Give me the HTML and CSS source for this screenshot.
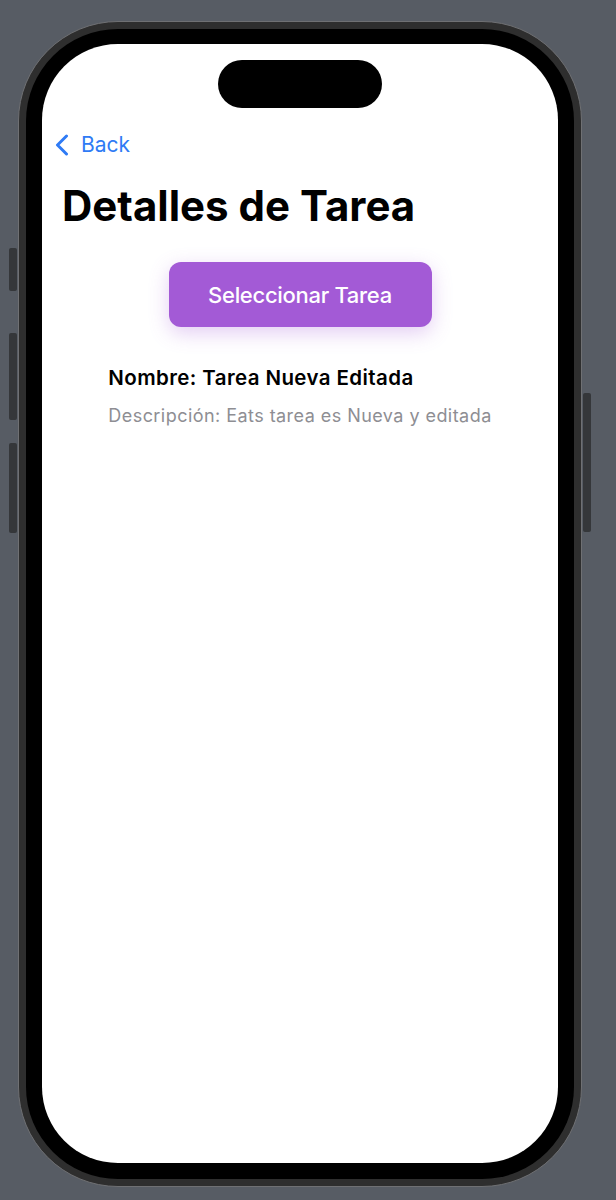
FILE: index.html
```html
<!DOCTYPE html>
<html lang="es">
<head>
<meta charset="utf-8">
<title>Detalles de Tarea</title>
<link rel="stylesheet" href="styles.css">
</head>
<body>
<div class="device">
  <span class="side-btn btn-action"></span>
  <span class="side-btn btn-vol-up"></span>
  <span class="side-btn btn-vol-down"></span>
  <span class="side-btn btn-power"></span>
  <div class="bezel">
    <div class="screen">
      <div class="island"></div>
      <nav class="nav-bar">
        <a class="back" href="#">
          <svg class="chevron" width="16" height="22" viewBox="0 0 16 22" aria-hidden="true">
            <path d="M12.5 2 L3.5 11 L12.5 20" fill="none" stroke="currentColor" stroke-width="3" stroke-linecap="round" stroke-linejoin="round"/>
          </svg>
          <span class="back-label">Back</span>
        </a>
      </nav>
      <h1 class="title">Detalles de Tarea</h1>
      <div class="content">
        <button class="select-btn" type="button">Seleccionar Tarea</button>
        <div class="task">
          <p class="task-name">Nombre: Tarea Nueva Editada</p>
          <p class="task-desc">Descripción: Eats tarea es Nueva y editada</p>
        </div>
      </div>
    </div>
  </div>
</div>
</body>
</html>
```

FILE: styles.css
```css
* {
  box-sizing: border-box;
}

html, body {
  margin: 0;
  padding: 0;
}

body {
  width: 616px;
  height: 1200px;
  background: #575c64;
  font-family: Inter, "Noto Sans", "Liberation Sans", sans-serif;
  padding: 21px 0 0 18px;
  overflow: hidden;
}

.device {
  position: relative;
  width: 564px;
  height: 1166px;
  border-radius: 100px;
  background: #2e2e2e;
  border: 1px solid #6f7073;
  padding: 7px;
}

.side-btn {
  position: absolute;
  width: 8px;
  background: #35373a;
  border-radius: 2px;
}

.btn-action {
  left: -10px;
  top: 226px;
  height: 43px;
}

.btn-vol-up {
  left: -10px;
  top: 311px;
  height: 87px;
}

.btn-vol-down {
  left: -10px;
  top: 421px;
  height: 90px;
}

.btn-power {
  right: -10px;
  top: 371px;
  height: 139px;
}

.bezel {
  width: 100%;
  height: 100%;
  background: #000;
  border-radius: 92px;
  padding: 15px 16px 16px 16px;
}

.screen {
  width: 516px;
  height: 1119px;
  background: #fff;
  border-radius: 76px;
  padding-top: 16px;
  display: flex;
  flex-direction: column;
}

.island {
  width: 164px;
  height: 48px;
  border-radius: 24px;
  background: #000;
  margin: 0 auto;
  flex: none;
}

.nav-bar {
  margin-top: 14px;
  height: 44px;
  display: flex;
  align-items: center;
  padding-left: 12px;
}

.back {
  display: flex;
  align-items: center;
  gap: 11px;
  color: #2f7bf5;
  text-decoration: none;
}

.chevron {
  display: block;
  flex: none;
  margin-top: 1px;
}

.back-label {
  font-size: 21px;
  line-height: 44px;
  font-weight: 400;
  padding-top: 1px;
}

.title {
  margin: 14px 0 0 0;
  padding-left: 20px;
  font-size: 42px;
  line-height: 52px;
  font-weight: 700;
  color: #000;
  letter-spacing: 0;
}

.content {
  display: flex;
  flex-direction: column;
  align-items: center;
  margin-top: 30px;
}

.select-btn {
  width: 263px;
  height: 65px;
  border: none;
  border-radius: 12px;
  background: #a35ad6;
  color: #fff;
  font-family: inherit;
  font-size: 22px;
  font-weight: 500;
  letter-spacing: -0.3px;
  padding-top: 1px;
  box-shadow: 0 6px 20px rgba(163, 90, 214, 0.3);
  cursor: pointer;
}

.task {
  margin-top: 38px;
  display: flex;
  flex-direction: column;
  align-items: flex-start;
}

.task-name {
  margin: 0;
  font-size: 20.5px;
  line-height: 26px;
  font-weight: 600;
  letter-spacing: 0.4px;
  color: #000;
}

.task-desc {
  margin: 13px 0 0 0;
  font-size: 18px;
  line-height: 24px;
  font-weight: 400;
  letter-spacing: 0.45px;
  color: #8e8e93;
}
```
